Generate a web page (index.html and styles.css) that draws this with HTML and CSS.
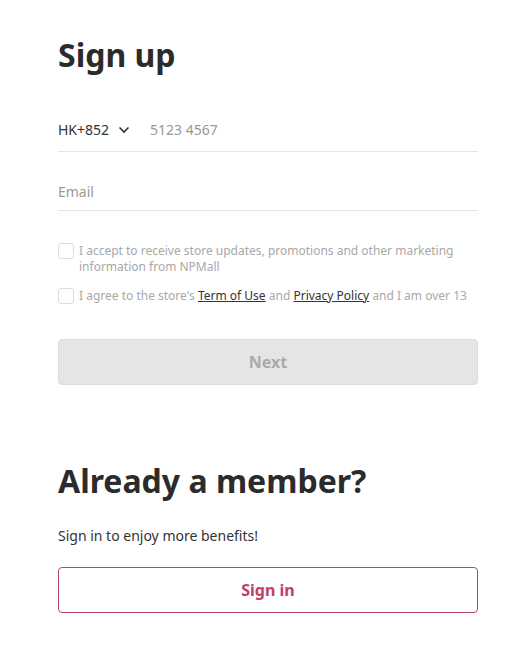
FILE: index.html
```html
<!DOCTYPE html>
<html>
<head>
<meta charset="utf-8">
<link rel="stylesheet" href="styles.css">
</head>
<body>
<main class="page">
  <h1 class="title">Sign up</h1>
  <div class="field phone">
    <span class="code">HK+852</span>
    <svg class="chev" width="12" height="8" viewBox="0 0 12 8"><path d="M1.5 1.5 L6 6 L10.5 1.5" fill="none" stroke="#333" stroke-width="1.6"/></svg>
    <span class="placeholder">5123 4567</span>
  </div>
  <div class="field email">
    <span class="placeholder">Email</span>
  </div>
  <div class="checks">
    <label class="check"><span class="box"></span><span class="ctext">I accept to receive store updates, promotions and other marketing information from NPMall</span></label>
    <label class="check"><span class="box"></span><span class="ctext">I agree to the store's <a class="link">Term of Use</a> and <a class="link">Privacy Policy</a> and I am over 13</span></label>
  </div>
  <button class="btn next">Next</button>
  <h2 class="title member">Already a member?</h2>
  <p class="sub">Sign in to enjoy more benefits!</p>
  <button class="btn signin">Sign in</button>
</main>
</body>
</html>
```
FILE: styles.css
```css
html, body { margin: 0; padding: 0; background: #fff; }
body { font-family: "Noto Sans", "Open Sans", sans-serif; color: #333; }
.page { width: 420px; margin-left: 58px; padding-top: 30px; display: flex; flex-direction: column; }
.title { font-size: 32px; font-weight: 700; margin: 0; line-height: 50px; color: #2b2b2b; }
.field { display: flex; align-items: center; border-bottom: 1px solid #e5e5e5; }
.phone { margin-top: 28px; height: 43px; }
.code { font-size: 14px; color: #333; }
.chev { margin-left: 9px; margin-right: 20px; }
.placeholder { font-size: 14px; color: #999; }
.email { margin-top: 20px; height: 38px; }
.checks { margin-top: 32px; display: flex; flex-direction: column; gap: 13px; }
.check { display: flex; align-items: flex-start; gap: 5px; font-size: 12px; line-height: 16px; color: #a8a8a8; }
.box { width: 14px; height: 14px; border: 1px solid #ddd; border-radius: 3px; flex: none; margin-top: 0; }
.link { color: #333; text-decoration: underline; }
.btn { font-family: inherit; font-size: 16px; font-weight: 700; height: 46px; border-radius: 4px; width: 420px; cursor: pointer; }
.next { margin-top: 35px; background: #e5e5e5; border: 1px solid #dcdcdc; color: #aaa; }
.member { margin-top: 71px; }
.sub { margin: 20px 0 0; font-size: 14px; line-height: 20px; color: #333; }
.signin { margin-top: 21px; background: #fff; border: 1px solid #b9446b; color: #c0406a; }
```
